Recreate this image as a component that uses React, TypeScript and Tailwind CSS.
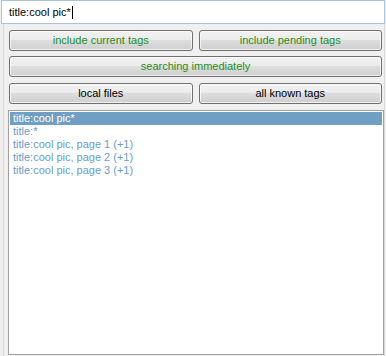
import React from "react";

const btn =
  "h-[21px] rounded-[3px] border border-[#707070] bg-[linear-gradient(to_bottom,#f2f2f2_0%,#ebebeb_50%,#dddddd_50%,#cfcfcf_100%)] flex items-center justify-center text-[11px] leading-none shadow-[inset_0_0_0_1px_rgba(255,255,255,0.7)]";

export default function App() {
  const rows = [
    "title:*",
    "title:cool pic, page 1 (+1)",
    "title:cool pic, page 2 (+1)",
    "title:cool pic, page 3 (+1)",
  ];
  return (
    <div
      className="w-[386px] h-[356px] bg-[#f0f0f0] flex flex-col overflow-hidden"
      style={{ fontFamily: '"Liberation Sans", Arial, sans-serif' }}
    >
      <div className="h-[24px] mx-[1px] border border-[#a9c3dc] bg-white flex items-center pl-[7px] text-[11px] text-black">
        <span>title:cool pic*</span>
        <span className="w-[1px] h-[13px] bg-black ml-[1px]" />
      </div>
      <div className="flex-1 ml-[3px] mr-[1px] border-x border-[#dcdcdc] flex flex-col pt-[6px]">
        <div className="flex gap-[6px] ml-[5px] mr-[2px]">
          <div className={btn + " flex-1 text-[#248f24]"}>include current tags</div>
          <div className={btn + " flex-1 text-[#248f24]"}>include pending tags</div>
        </div>
        <div className="flex ml-[5px] mr-[2px] mt-[5px]">
          <div className={btn + " flex-1 text-[#248f24]"}>searching immediately</div>
        </div>
        <div className="flex gap-[6px] ml-[5px] mr-[2px] mt-[6px]">
          <div className={btn + " flex-1 text-black"}>local files</div>
          <div className={btn + " flex-1 text-black"}>all known tags</div>
        </div>
        <div className="flex-1 mt-[6px] ml-[4px] mr-[0px] mb-[1px] border border-[#a0a0a0] bg-white p-[1px] text-[11px] leading-[13px]">
          <div className="h-[13px] bg-[#6f9fc2] text-white pl-[3px]">title:cool pic*</div>
          {rows.map((r) => (
            <div key={r} className="h-[13px] text-[#6a9bcb] pl-[3px]">
              {r}
            </div>
          ))}
        </div>
      </div>
    </div>
  );
}
